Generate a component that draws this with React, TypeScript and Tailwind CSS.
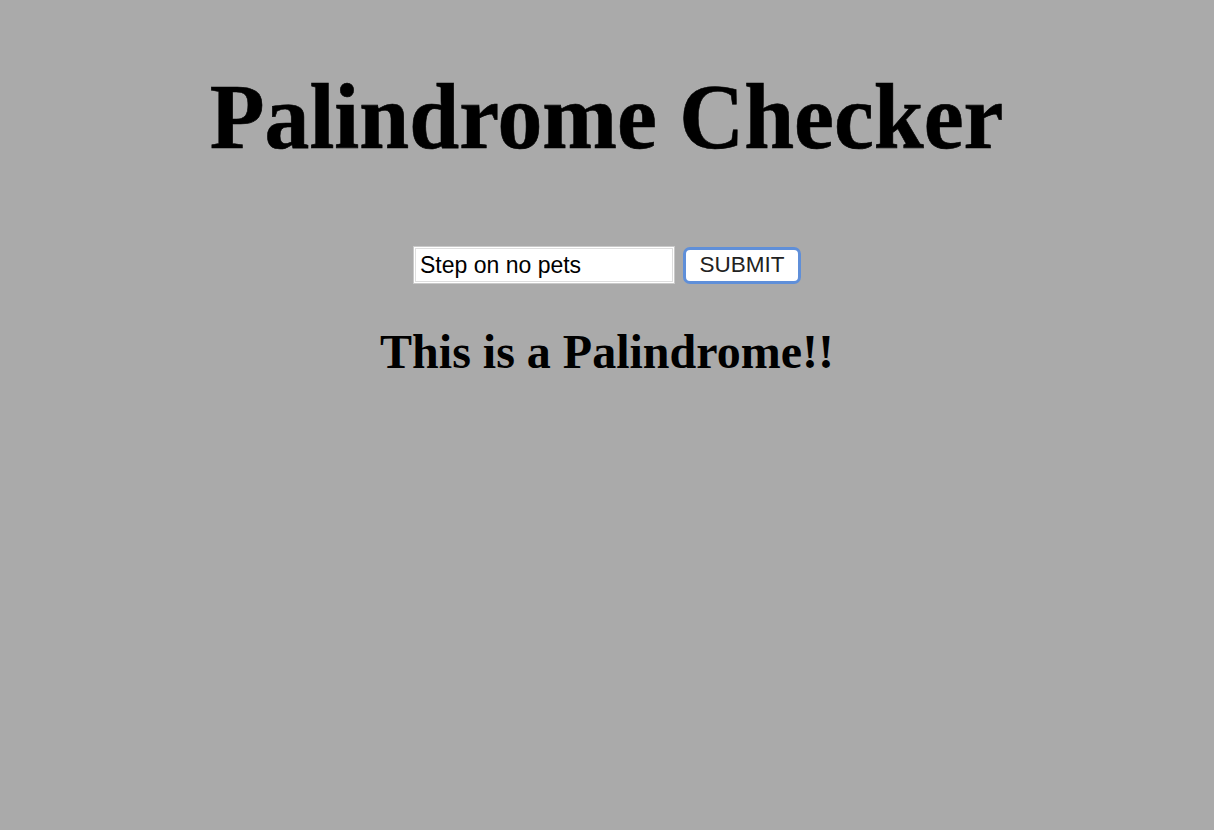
import { useState } from "react";

export default function App() {
  const [text, setText] = useState("Step on no pets");
  const [result, setResult] = useState("This is a Palindrome!!");

  const check = (e: React.FormEvent) => {
    e.preventDefault();
    const clean = text.toLowerCase().replace(/[^a-z0-9]/g, "");
    const isPal = clean.length > 0 && clean === clean.split("").reverse().join("");
    setResult(isPal ? "This is a Palindrome!!" : "This is not a Palindrome!!");
  };

  return (
    <div className="min-h-[830px] w-full bg-[#aaaaaa] flex flex-col items-center pt-[69px] font-['Liberation_Serif',serif] text-black">
      {/* Title */}
      <h1 className="text-[94px] leading-none font-bold scale-x-[0.955] whitespace-nowrap [-webkit-text-stroke:0.6px_black]">
        Palindrome Checker
      </h1>

      {/* Input row */}
      <form onSubmit={check} className="flex items-center gap-2 mt-[83px]">
        <input
          value={text}
          onChange={(e) => setText(e.target.value)}
          className="w-[262px] h-[38px] bg-white border border-[#c9c9c9] shadow-[inset_0_0_0_1px_#ffffff,inset_0_0_0_2px_#dedede] px-[6px] pt-[1px] text-[23px] text-black font-['Liberation_Sans',Arial,sans-serif] outline-none"
        />
        <button
          type="submit"
          className="w-[118px] h-[37px] bg-white rounded-[7px] border-[3px] border-[#5f8fd9] text-[22.5px] text-[#222] font-['Liberation_Sans',Arial,sans-serif] leading-none"
        >
          SUBMIT
        </button>
      </form>

      {/* Result */}
      <h2 className="text-[48px] leading-none font-bold mt-[44px] whitespace-nowrap">{result}</h2>
    </div>
  );
}
